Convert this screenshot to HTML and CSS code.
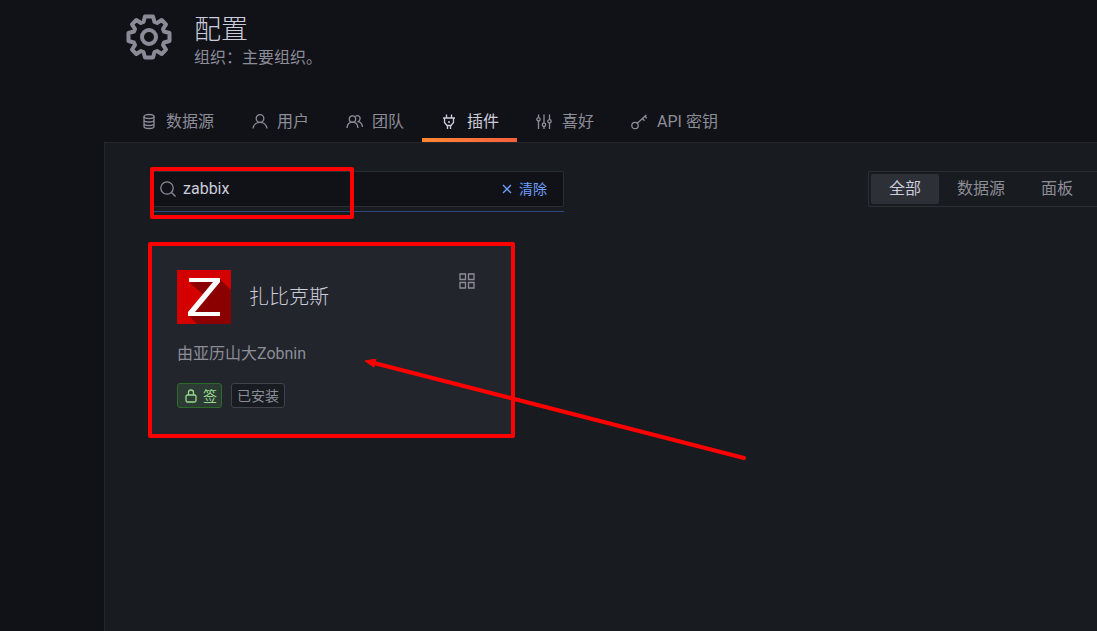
FILE: index.html
```html
<!DOCTYPE html>
<html lang="zh-CN">
<head>
    <meta charset="UTF-8">
    <meta name="viewport" content="width=device-width, initial-scale=1.0">
    <title>配置</title>
    <link rel="stylesheet" href="styles.css">
</head>
<body>

    <div id="root">
        <header class="header">
            <svg class="gear" viewBox="-23 -23 46 46" aria-hidden="true">
                <path d="M-4-20.5H4L5.5-15 8-14 12.7-17 17-12.7 14-8 15-5.5 20.5-4V4L15 5.5 14 8 17 12.7 12.7 17 8 14 5.5 15 4 20.5H-4L-5.5 15-8 14-12.7 17-17 12.7-14 8-15 5.5-20.5 4V-4L-15-5.5-14-8-17-12.7-12.7-17-8-14-5.5-15Z"/>
                <circle r="7"/>
            </svg>
            <div>
                <h1>配置</h1>
                <div class="org">组织：主要组织。</div>
            </div>
        </header>

        <nav class="tabs">
            <a href="#">
                <svg class="icon" viewBox="0 0 18 18"><ellipse cx="10" cy="3.500" rx="5" ry="2"/><path d="M5 3.500v10c0 1.200 2 2 5 2s5-.8 5-2v-10M5 7c0 1.200 2 2 5 2s5-.8 5-2M5 10.500c0 1.200 2 2 5 2s5-.8 5-2"/></svg>
                数据源
            </a>
            <a href="#">
                <svg class="icon" viewBox="0 0 18 18"><circle cx="10" cy="5.500" r="3.800"/><path d="M3 15.500c.5-3.800 3.500-6.200 7-6.200s6.500 2.400 7 6.200"/></svg>
                用户
            </a>
            <a href="#">
                <svg class="icon" viewBox="0 0 18 18"><circle cx="7.500" cy="6" r="3.200"/><path d="M2 15c.3-3.500 2.500-5.800 5.500-5.800s5.200 2.300 5.500 5.800M10.500 3.200c2.500-1.500 5 .2 4.500 2.800-.2 1.300-.8 2-1.800 2.700 2.400.5 4 2.500 4.300 5.300"/></svg>
                团队
            </a>
            <a href="#" class="active">
                <svg class="icon" viewBox="0 0 18 18"><path d="M3 5h12M6.500 1.500V5M11.500 1.500V5M4.500 5v4.500L7 12.500h4l2.500-3V5M7.500 12.500v3.500M10.500 12.500v3.500M8 9h2"/></svg>
                插件
            </a>
            <a href="#">
                <svg class="icon" viewBox="0 0 18 18"><path d="M3.500 1.500v3M3.500 8v8M9 1.500v8.500M9 13.500v2.500M14.500 1.500v5M14.500 10v6"/><circle cx="3.500" cy="6.300" r="1.700"/><circle cx="9" cy="11.800" r="1.700"/><circle cx="14.500" cy="8.300" r="1.700"/></svg>
                喜好
            </a>
            <a href="#">
                <svg class="icon" viewBox="0 0 18 18"><circle cx="5" cy="12.500" r="3.200"/><path d="M7.300 10.200l9-8.200M12.500 5.500l2 2.200M15 3.300l1.800 2"/></svg>
                API 密钥
            </a>
        </nav>

        <main class="content">
            <div class="toolbar">
                <div class="search-area">
                    <div class="search">
                        <label for="keyword">
                            <svg class="glass" viewBox="0 0 16 16" role="img" aria-label="搜索"><circle cx="7" cy="7" r="6.200"/><path d="M11.500 11.500l4 4"/></svg>
                        </label>
                        <input type="text" id="keyword" value="zabbix">
                        <button type="button" class="clear">
                            <svg viewBox="0 0 10 10" aria-hidden="true"><path d="M1 1l8 8M9 1L1 9"/></svg>
                            清除
                        </button>
                    </div>
                    <div class="mark search-mark"></div>
                </div>
                <div class="filter">
                    <button type="button" class="selected">全部</button>
                    <button type="button">数据源</button>
                    <button type="button">面板</button>
                </div>
            </div>

            <article class="card">
                <div class="card-head">
                    <svg class="logo" viewBox="0 0 54 54" aria-hidden="true">
                        <path fill="#d40000" d="M0 0h54v54H0z"/>
                        <path fill="#8b0000" d="M42 8l12 12v34H20l-9-9 17-19L13 13z"/>
                        <path fill="#fff" d="M12 8h31v4L18 42h25v4H11v-4l25-30H12z"/>
                    </svg>
                    <h2>扎比克斯</h2>
                    <svg class="apps" viewBox="0 0 16 16"><path d="M1 1h5.500v5.500H1zM9.500 1H15v5.500H9.500zM1 9.500h5.500V15H1zM9.500 9.500H15V15H9.500z"/></svg>
                </div>
                <p>由亚历山大Zobnin</p>
                <div class="badges">
                    <span class="badge signed">
                        <svg viewBox="0 0 12 14" aria-hidden="true"><rect x="1" y="6" width="10" height="7" rx="1.500"/><path d="M3.500 6V3.500a2.500 2.500 0 0 1 5 0V6"/></svg>
                        签
                    </span>
                    <span class="badge">已安装</span>
                </div>
                <div class="mark card-mark"></div>
                <svg class="arrow" viewBox="0 0 382 102" aria-hidden="true">
                    <path class="line" d="M9 4L379 99"/>
                    <path class="head" d="M0 2l11-2-2 8z"/>
                </svg>
            </article>
        </main>
    </div>

</body>
</html>
```

FILE: styles.css
```css
* {
    box-sizing: border-box;
}

body {
    margin: 0;
    background: #111217;
    color: #ccccdc;
    font-family: Roboto, "Noto Sans CJK SC", sans-serif;
    font-size: 16px;
    font-weight: 400;
    line-height: 24px;
}

#root {
    display: flex;
    flex-direction: column;
    min-height: 100vh;
    margin-left: 104px;
    overflow: hidden;
}

h1, h2, p {
    margin: 0;
}

h1, h2 {
    font-weight: 300;
}

svg {
    flex: none;
    fill: none;
    stroke: currentColor;
}

input, button {
    border: 0;
    padding: 0;
    background: none;
    color: inherit;
    font: inherit;
}

/* header */
.header {
    display: flex;
    gap: 22px;
    height: 100px;
    padding: 14px 22px;
}

.gear {
    width: 46px;
    height: 46px;
    color: #8b8b97;
    stroke-width: 4;
    stroke-linejoin: round;
}

h1 {
    font-size: 27px;
    line-height: 32px;
}

.org {
    color: #8d8d99;
}

/* tabs */
.tabs {
    display: flex;
    padding-left: 17px;
}

.tabs a {
    display: flex;
    align-items: center;
    gap: 9px;
    height: 42px;
    padding: 6px 18px 0;
    border-bottom: 4px solid transparent;
    color: #8d8d99;
    text-decoration: none;
    white-space: nowrap;
}

.tabs .active {
    color: #ccccdc;
    border-image: linear-gradient(90deg, #ff8833, #f55f3e) 0 0 4 0;
}

.icon {
    width: 18px;
    height: 18px;
    stroke-width: 1.3;
}

/* content */
.content {
    flex: 1;
    padding: 28px 0 28px 45px;
    border: 1px solid #25272c;
    border-width: 1px 0 0 1px;
    background: #181b1f;
}

.toolbar {
    display: flex;
    justify-content: space-between;
    align-items: flex-start;
}

.search-area {
    position: relative;
    width: 414px;
    height: 41px;
    border-bottom: 1px solid #2d4780;
}

.search {
    display: flex;
    align-items: center;
    height: 36px;
    padding: 0 16px 0 9px;
    border: 1px solid #2d2e34;
    border-radius: 2px;
    background: #111217;
}

.search label {
    display: flex;
}

.glass {
    width: 16px;
    height: 16px;
    color: #8d8d99;
    stroke-width: 1.3;
}

.search input {
    flex: 1;
    min-width: 0;
    margin-left: 7px;
    outline: 0;
}

.clear {
    display: flex;
    align-items: center;
    gap: 7px;
    color: #6e9fff;
    font-size: 14px;
    line-height: 22px;
}

.clear svg {
    width: 10px;
    height: 10px;
    stroke-width: 1.3;
}

.filter {
    display: flex;
    height: 36px;
    padding: 2px 6px 2px 2px;
    border: 1px solid #2d2e34;
    border-right: 0;
    border-radius: 2px 0 0 2px;
    color: #8d8d99;
}

.filter button {
    padding: 0 18px;
    border-radius: 2px;
    white-space: nowrap;
}

.filter .selected {
    background: #2d3036;
    color: #ccccdc;
}

/* plugin card */
.card {
    position: relative;
    width: 363px;
    height: 192px;
    margin-top: 32px;
    padding: 26px 27px;
    background: #22252b;
}

.card-head {
    display: flex;
    align-items: center;
    gap: 18px;
}

.logo {
    width: 54px;
    height: 54px;
    stroke: none;
}

h2 {
    flex: 1;
    font-size: 20px;
}

.apps {
    align-self: flex-start;
    width: 16px;
    height: 16px;
    margin: 3px 11px 0 0;
    color: #8d8d99;
    stroke-width: 1.3;
}

.card p {
    margin: 18px 0 17px;
    color: #8d8d99;
}

.badges {
    display: flex;
    gap: 9px;
}

.badge {
    display: flex;
    align-items: center;
    gap: 6px;
    height: 25px;
    padding: 0 5px;
    border: 1px solid #404249;
    border-radius: 3px;
    background: #181b1f;
    color: #8d8d99;
    font-size: 14px;
    line-height: 22px;
}

.signed {
    padding: 0 4px 0 7px;
    border-color: #2c6a2a;
    background: #2d3b35;
    color: #96d98d;
}

.signed svg {
    width: 12px;
    height: 14px;
    stroke-width: 1.3;
}

/* red marks */
.mark {
    position: absolute;
    border: 4px solid #f00;
    border-radius: 2px;
}

.search-mark {
    top: -4px;
    left: 0;
    width: 204px;
    height: 52px;
}

.card-mark {
    inset: -2px;
}

.arrow {
    position: absolute;
    top: 115px;
    left: 215px;
    width: 382px;
    height: 102px;
    color: #f00;
}

.arrow .line {
    stroke-width: 4;
    stroke-linecap: round;
}

.arrow .head {
    fill: currentColor;
}
```
